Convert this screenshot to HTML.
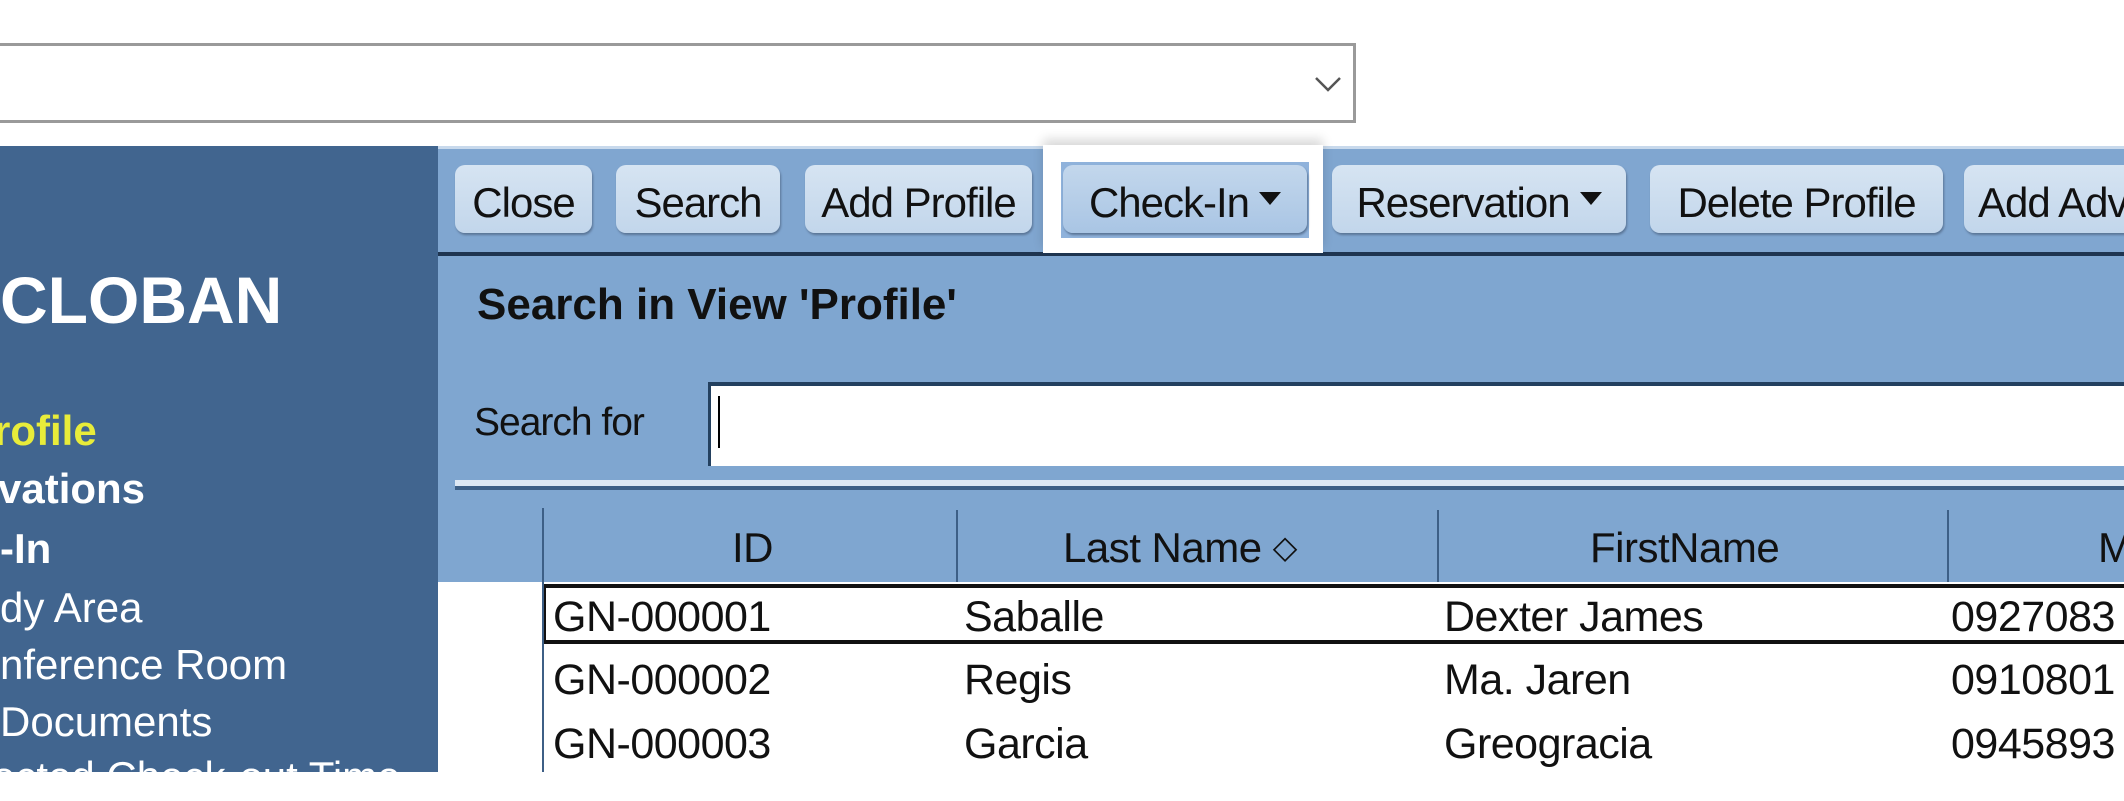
<!DOCTYPE html>
<html><head><meta charset="utf-8"><style>
*{margin:0;padding:0;box-sizing:border-box}
body{width:2124px;height:772px;overflow:hidden;background:#fff;position:relative;font-family:"Liberation Sans",Arial,sans-serif;color:#111}
div,span{position:absolute}
.combo{left:-4px;top:43px;width:1360px;height:80px;border:3px solid #9a9a9a;background:#fff}
.side{left:0;top:146px;width:438px;height:626px;background:#41658f}
.tb{left:438px;top:146px;width:1686px;height:108px;background:#80a6d0;border-top:3px solid #c8d9ec}
.dl{left:438px;top:252px;width:1686px;height:4px;background:#1f3550}
.panel{left:438px;top:256px;width:1686px;height:332px;background:#7fa6d0}
.btn{top:165px;height:68px;border-radius:10px;background:linear-gradient(#d6e4f2,#c2d6eb);box-shadow:1px 2px 2px #5a7596;font-size:42px;line-height:76px;text-align:center;white-space:nowrap;letter-spacing:-1px}
.tri{display:inline-block;position:relative;width:0;height:0;border-left:11px solid transparent;border-right:11px solid transparent;border-top:13px solid #111;top:-12px;margin-left:10px}
.s{color:#fff;font-size:42px;left:0;white-space:nowrap}
.b{font-weight:bold}
.cell{font-size:43px;white-space:nowrap;letter-spacing:-0.5px}
</style></head><body>
<div class="combo"></div>
<svg style="position:absolute;left:1314px;top:74px" width="28" height="20"><path d="M2 4 L14 16 L26 4" fill="none" stroke="#555" stroke-width="2.5"/></svg>
<div class="side"></div>
<div class="s b" style="top:262px;font-size:66px">CLOBAN</div>
<div class="s b" style="top:407px;color:#e8ec3a;left:-6px">rofile</div>
<div class="s b" style="top:465px;left:-2px">vations</div>
<div class="s b" style="top:525px">-In</div>
<div class="s" style="top:584px">dy Area</div>
<div class="s" style="top:641px">nference Room</div>
<div class="s" style="top:698px">Documents</div>
<div class="s" style="top:753px;left:-8px">ected Check-out Time</div>
<div class="tb"></div>
<div class="dl"></div>
<div style="left:1043px;top:145px;width:280px;height:108px;background:#fff;box-shadow:0 -6px 10px rgba(0,0,0,0.15)"></div>
<div class="btn" style="left:455px;width:137px">Close</div>
<div class="btn" style="left:616px;width:164px">Search</div>
<div class="btn" style="left:805px;width:227px">Add Profile</div>
<div class="btn" style="left:1061px;width:248px;top:162px;height:76px;border-radius:0;background:#8fb2db;box-shadow:none"></div>
<div class="btn" style="left:1063px;width:244px;background:linear-gradient(#c3d7ec,#a9c5e4)">Check-In<span class="tri"></span></div>
<div class="btn" style="left:1332px;width:294px">Reservation<span class="tri"></span></div>
<div class="btn" style="left:1650px;width:293px">Delete Profile</div>
<div class="btn" style="left:1964px;width:200px;text-align:left;padding-left:14px">Add Adv</div>
<div class="panel"></div>
<div class="b" style="left:477px;top:280px;font-size:44px">Search in View 'Profile'</div>
<div style="left:474px;top:401px;font-size:39px;letter-spacing:-1px">Search for</div>
<div style="left:708px;top:382px;width:1420px;height:84px;background:#fff;border-top:4px solid #23405f;border-left:3px solid #23405f"></div>
<div style="left:718px;top:396px;width:2px;height:52px;background:#000"></div>
<div style="left:455px;top:480px;width:1669px;height:6px;background:#dde8f4"></div>
<div style="left:455px;top:486px;width:1669px;height:4px;background:#3d5f86"></div>
<div style="left:542px;top:508px;width:2px;height:264px;background:#3d5f86"></div>
<div style="left:956px;top:510px;width:2px;height:72px;background:#3d5f86"></div>
<div style="left:1437px;top:510px;width:2px;height:72px;background:#3d5f86"></div>
<div style="left:1947px;top:510px;width:2px;height:72px;background:#3d5f86"></div>
<div class="cell" style="left:732px;top:524px;font-size:42px">ID</div>
<div class="cell" style="left:1063px;top:524px;font-size:42px">Last Name <span style="position:relative;font-size:32px;top:-4px">◇</span></div>
<div class="cell" style="left:1590px;top:524px;font-size:42px">FirstName</div>
<div class="cell" style="left:2098px;top:524px;font-size:42px">M</div>
<div style="left:438px;top:582px;width:1686px;height:190px;background:#fff"></div>
<div style="left:542px;top:582px;width:2px;height:190px;background:#3d5f86"></div>
<div style="left:544px;top:584px;width:1580px;height:60px;border-top:4px solid #111;border-bottom:4px solid #111;border-left:2px solid #111"></div>
<div class="cell" style="left:553px;top:593px">GN-000001</div>
<div class="cell" style="left:964px;top:593px">Saballe</div>
<div class="cell" style="left:1444px;top:593px">Dexter James</div>
<div class="cell" style="left:1951px;top:593px">0927083</div>
<div class="cell" style="left:553px;top:656px">GN-000002</div>
<div class="cell" style="left:964px;top:656px">Regis</div>
<div class="cell" style="left:1444px;top:656px">Ma. Jaren</div>
<div class="cell" style="left:1951px;top:656px">0910801</div>
<div class="cell" style="left:553px;top:720px">GN-000003</div>
<div class="cell" style="left:964px;top:720px">Garcia</div>
<div class="cell" style="left:1444px;top:720px">Greogracia</div>
<div class="cell" style="left:1951px;top:720px">0945893</div>
</body></html>
